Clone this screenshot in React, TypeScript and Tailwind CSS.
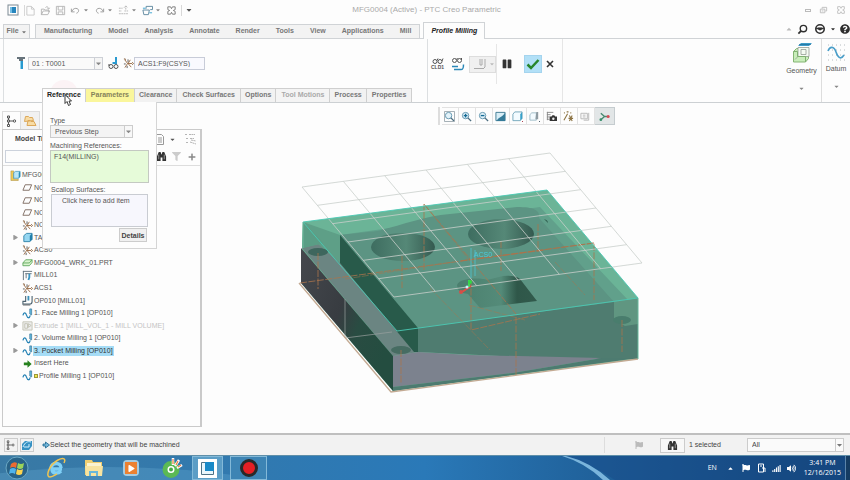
import { ReactNode } from 'react'
import clsx from 'clsx'
import { FaCaretDown, FaCaretUp, FaPause, FaPlay, FaQuestionCircle, FaFlag, FaFilter, FaPlus, FaVolumeUp, FaSignal } from 'react-icons/fa'

type IconProps = {
  className?: string
}

type TreeItem = {
  label: string
  icon: (props: IconProps) => ReactNode
  expandable?: boolean
  root?: boolean
  faded?: boolean
  selected?: boolean
  marker?: boolean
}

// Title bar icons
const AppIcon = ({ className }: IconProps) => (
  <svg className={className} viewBox="0 0 12 12" fill="none">
    <rect x="1" y="1" width="10" height="10" stroke="#7d8a93" />
    <rect x="3" y="3" width="6" height="6" fill="#2685bd" />
    <path d="M3 3h2v6H3z" fill="#73bde4" />
  </svg>
)

const NewIcon = ({ className }: IconProps) => (
  <svg className={className} viewBox="0 0 12 12" fill="none" stroke="#c8c8c8">
    <path d="M2 1.500h5l3 3v6.500H2zM7 1.500v3h3" />
  </svg>
)

const OpenIcon = ({ className }: IconProps) => (
  <svg className={className} viewBox="0 0 12 12" fill="none" stroke="#b2b2b2">
    <path d="M1.500 10.500v-6h3l1 1h4v2M1.500 10.500l2-4h7l-2 4zM6 3c1-2 3-1 3.500 1M8 3.500l1.500 1 1-1.500" />
  </svg>
)

const SaveIcon = ({ className }: IconProps) => (
  <svg className={className} viewBox="0 0 12 12" fill="none" stroke="#b5b5b5">
    <path d="M1.500 1.500h9v9h-9zM3.500 1.500v4h5v-4M3.500 10.500v-3h5v3" />
  </svg>
)

const UndoIcon = ({ className }: IconProps) => (
  <svg className={className} viewBox="0 0 12 12" fill="none" stroke="#999">
    <path d="M1.500 4v3.500H5M2 7c1-3 4-4 6-3s2 4-1 5" />
  </svg>
)

const RegenIcon = ({ className }: IconProps) => (
  <svg className={className} viewBox="0 0 12 12" fill="none" stroke="#b5b5b5">
    <path d="M1 3.500h4M1 6.500h3M1 9.500h10M7 6.500h4M8.500 5V1M6.500 3l2-2 2 2" strokeDasharray="2 .6" />
  </svg>
)

const WindowsIcon = ({ className }: IconProps) => (
  <svg className={className} viewBox="0 0 12 12" fill="none">
    <path d="M4.500 4V1.500h7V5H9M1 5.500h7l-1 5H2z" stroke="#5d879e" />
    <path d="M1 3.500h3M8 8.500h3" stroke="#36a2d0" />
  </svg>
)

const CloseBoxIcon = ({ className }: IconProps) => (
  <svg className={className} viewBox="0 0 12 12" fill="none" stroke="currentColor">
    <path d="M2 2h3l1 2 1-2h3v3L8 6l2 1v3H7L6 8l-1 2H2V7l2-1-2-1z" />
  </svg>
)

const RestoreIcon = ({ className }: IconProps) => (
  <svg className={className} viewBox="0 0 10 10" fill="none" stroke="#bbb">
    <path d="M3.500 3V1.500h5v4H7M1.500 3.500h5v4h-5zM3 5.500h2" />
  </svg>
)

const SearchIcon = ({ className }: IconProps) => (
  <svg className={className} viewBox="0 0 12 12" fill="none" stroke="#2f2f2f" strokeWidth="1.500">
    <circle cx="7" cy="5" r="3.500" />
    <path d="M4.500 7.500 1.500 10.500" strokeWidth="2" />
  </svg>
)

const LearnIcon = ({ className }: IconProps) => (
  <svg className={className} viewBox="0 0 12 12" fill="none">
    <circle cx="6" cy="6" r="4.200" stroke="#2f2f2f" strokeWidth="1.600" />
    <path d="M1 5h10L6 7.500z" fill="#2f2f2f" />
    <path d="M3.500 4.500h5" stroke="#888" />
  </svg>
)

// Ribbon icons
const ToolIcon = ({ className }: IconProps) => (
  <svg className={className} viewBox="0 0 10 14">
    <path d="M1 1h8v2H7v2H3V3H1z" fill="#67737b" />
    <path d="M4 5h3v8H4z" fill="#2a9ad0" />
    <path d="M4 5h1v8H4z" fill="#8cd3ef" />
  </svg>
)

const GlassesToolIcon = ({ className }: IconProps) => (
  <svg className={className} viewBox="0 0 12 14" fill="none">
    <path d="M9 1v6H5.500" stroke="#2a9ad0" strokeWidth="2" />
    <g stroke="#555"><circle cx="4" cy="10.500" r="2" /><circle cx="9" cy="10.500" r="2" /><path d="M2 10V8" /></g>
  </svg>
)

const CsysIcon = ({ className }: IconProps) => (
  <svg className={className} viewBox="0 0 12 12" fill="none">
    <path d="M5 6h5M5 6 2 10.500M5 6 2 2M5.500 6 9 10M5.500 6 8 2" stroke="#9a6b45" />
    <path d="M5.500 1.500v3M1 6.500h2M4.500 8.500v2.500" stroke="#555" />
    <path d="M10 4.500 11.500 6 10 7.500M1 1h1.500v1.500" stroke="#8a6340" />
  </svg>
)

const CldIcon = ({ className }: IconProps) => (
  <svg className={className} viewBox="0 0 12 6" fill="none" stroke="#555">
    <circle cx="3" cy="3.500" r="2" /><circle cx="8" cy="3.500" r="2" /><path d="M5 2.500 6 .500M10 3l1-2.500" />
  </svg>
)

const PathIcon = ({ className }: IconProps) => (
  <svg className={className} viewBox="0 0 14 14" fill="none">
    <g stroke="#555"><circle cx="3.500" cy="3.500" r="2" /><circle cx="8.500" cy="3.500" r="2" /><path d="M5.500 2.500 6.500 1M10.500 3V1" /></g>
    <path d="M1 9.500h6M3 12.500h7c2 0 2.500-1 2.500-5" stroke="#2a88b8" strokeWidth="1.500" />
  </svg>
)

const GeometryIcon = ({ className }: IconProps) => (
  <svg className={className} viewBox="0 0 20 22" fill="none">
    <path d="M9 1h11l-3 3H6z" fill="#3c9bc9" />
    <path d="M7 2.500h12" stroke="#1f6c94" strokeWidth=".7" />
    <path d="M1.500 9.500l3-3h12v10l-3 3.500h-12z" fill="#c8edba" stroke="#85b574" />
    <path d="M6 5.500h11v9H6zM6 14.500l-3 3M9 7.500h5v5H9z" fill="#f4fbf2" stroke="#959d94" strokeWidth=".8" />
    <path d="M1.500 9.500h4v5h8V20" stroke="#7fb070" />
  </svg>
)

const DatumIcon = ({ className }: IconProps) => (
  <svg className={className} viewBox="0 0 20 20" fill="none">
    {[2, 7, 12, 17].map((y) => <path key={y} d={`M2 ${y}h17`} stroke="#b6bcc0" strokeDasharray="1 3" />)}
    <path d="M2 8c2-5 6-5 8 1s5 8 8 3" stroke="#4a9ec9" strokeWidth="1.600" />
  </svg>
)

// Graphics toolbar icons
const Magnifier = ({ className, children }: IconProps & { children?: ReactNode }) => (
  <svg className={className} viewBox="0 0 12 12" fill="none">
    <circle cx="5" cy="5" r="3.500" fill="#e3f3fa" stroke="#5d93ad" />
    <path d="M7.500 7.500 11 11" stroke="#4d6e80" strokeWidth="1.500" />
    {children}
  </svg>
)

const ZoomFitIcon = ({ className }: IconProps) => (
  <Magnifier className={className}><path d="M.5.500h11v11H.500z" stroke="#9aa6ad" /></Magnifier>
)

const ZoomInIcon = ({ className }: IconProps) => (
  <Magnifier className={className}><path d="M3 5h4M5 3v4" stroke="#146a95" strokeWidth="1.500" /></Magnifier>
)

const ZoomOutIcon = ({ className }: IconProps) => (
  <Magnifier className={className}><path d="M3 5h4" stroke="#146a95" strokeWidth="1.500" /></Magnifier>
)

const RepaintIcon = ({ className }: IconProps) => (
  <svg className={className} viewBox="0 0 12 12">
    <path d="M1 1.500h10v9H1z" fill="#d8eef7" stroke="#3d7892" />
    <path d="M11 2v9H2c1-4 6-4 9-9z" fill="#357b99" />
  </svg>
)

const BoxIcon = ({ className }: IconProps) => (
  <svg className={className} viewBox="0 0 12 12">
    <path d="M1 3.500 3 1h8v7l-2 2.500H1z" fill="#f3fbff" stroke="#72a5ba" />
    <path d="M9 3.500 11 1v7l-2 2.500z" fill="#38a1c9" />
    <path d="M11 11h1v1h-1z" fill="#a34" />
  </svg>
)

const SavedViewIcon = ({ className }: IconProps) => (
  <svg className={className} viewBox="0 0 12 12">
    <path d="M1 4l2-2h5v8H1z" fill="#f3fbff" stroke="#9cbac6" />
    <path d="M8 1h2v8H7z" fill="#8e9ba2" />
    <path d="M11 11h1v1h-1z" fill="#456" />
  </svg>
)

const CameraIcon = ({ className }: IconProps) => (
  <svg className={className} viewBox="0 0 12 12" fill="none">
    <path d="M1 1.500h7M1 4h4M1 6.500h3M1 9h3M1.500 1v9" stroke="#888" />
    <path d="M4 6h2l1-1.500h2L10 6h2v5H4z" fill="#333" />
    <circle cx="8" cy="8.500" r="1.300" fill="#eee" />
  </svg>
)

const DatumDisplayIcon = ({ className }: IconProps) => (
  <svg className={className} viewBox="0 0 12 12" fill="none">
    <path d="M1 2h1M4 1h2M8 2h1M5 3 1 10M6 8h5M7 5l3 6M10 5l-3 6" stroke="#8d7443" strokeWidth="1.200" />
  </svg>
)

const AnnotationIcon = ({ className }: IconProps) => (
  <svg className={className} viewBox="0 0 12 12" fill="none" stroke="#b5b5b5">
    <path d="M1 2.500h7v6H1zM3 4.500h3M3 6.500h3M9.500 2v8H4" />
  </svg>
)

const SpinIcon = ({ className }: IconProps) => (
  <svg className={className} viewBox="0 0 12 12" fill="none">
    <path d="M2 2.500 6 6 2 9.500M6 6h4" stroke="#478a70" strokeWidth="1.500" />
    <circle cx="10" cy="6" r="1.700" fill="#d64c55" />
    <circle cx="2" cy="9.500" r="1.500" fill="#38906c" />
  </svg>
)

// Model tree icons
const StructureIcon = ({ className }: IconProps) => (
  <svg className={className} viewBox="0 0 12 12" fill="none" stroke="#555">
    <path d="M1.500 1h2v2h-2zM1.500 5h2v2h-2zM1.500 9.500h2v2h-2zM2.500 3v2M2.500 7v2.500M4 6h3" />
    <circle cx="8.500" cy="6" r="1.200" />
  </svg>
)

const FoldersIcon = ({ className }: IconProps) => (
  <svg className={className} viewBox="0 0 14 12" fill="#f8dca4" stroke="#dca85a">
    <path d="M1.500 6.500l1-5h3l1 1h3l1 3zM4 10.500l1-5h2l1 1h3l2 4z" />
  </svg>
)

const AssemblyIcon = ({ className }: IconProps) => (
  <svg className={className} viewBox="0 0 12 12">
    <path d="M1 1h3v9h5v1.500H1z" fill="#f0ca55" stroke="#ad9144" strokeWidth=".6" />
    <path d="M4 3l2-1.500h5V7L9.500 9H4z" fill="#b8e6f8" stroke="#3d91b5" strokeWidth=".8" />
    <path d="M9.500 3 11 1.500V7L9.500 9z" fill="#298bb7" />
  </svg>
)

const PlaneIcon = ({ className }: IconProps) => (
  <svg className={className} viewBox="0 0 12 12" fill="none" stroke="#7d695f">
    <path d="M3.500 3h7l-2.500 6H1z" />
  </svg>
)

const PartIcon = ({ className }: IconProps) => (
  <svg className={className} viewBox="0 0 12 12">
    <path d="M2 4l3-2.500h6V8L8.500 10.500H2z" fill="#95d6f1" stroke="#2f82a8" />
    <path d="M8.500 4 11 1.500V8l-2.500 2.500z" fill="#217fab" />
  </svg>
)

const WorkpieceIcon = ({ className }: IconProps) => (
  <svg className={className} viewBox="0 0 12 12">
    <path d="M1 6.500l3-3.500h7v3L8 9.500H1z" fill="#d9f4ce" stroke="#62a960" />
    <path d="M1 6.500h7l3-3.500" fill="none" stroke="#62a960" />
  </svg>
)

const MillIcon = ({ className }: IconProps) => (
  <svg className={className} viewBox="0 0 12 12" fill="none">
    <path d="M1 1.500h10M1.500 1v10M3.500 4h7M4.500 4v5" stroke="#60717b" />
    <path d="M8 4v4l-1 3" stroke="#3a95c3" strokeWidth="2" />
  </svg>
)

const OperationIcon = ({ className }: IconProps) => (
  <svg className={className} viewBox="0 0 12 12" fill="none">
    <path d="M4 1v6H1v3h7c2 0 3-1 3-3V1" stroke="#4b6270" strokeWidth="1.200" />
    <path d="M7 1v5" stroke="#3b91bb" strokeWidth="2" />
    <path d="M1 11h8" stroke="#777" />
  </svg>
)

const StepIcon = ({ className }: IconProps) => (
  <svg className={className} viewBox="0 0 12 12" fill="none">
    <path d="M1 8c1-4 3-3 4 0s3 4 4 0" stroke="#2783b5" strokeWidth="1.400" />
    <path d="M8.500 1v5.500l2 1V1z" fill="#66bfe5" stroke="#3a779a" strokeWidth=".8" />
  </svg>
)

const ExtrudeIcon = ({ className }: IconProps) => (
  <svg className={className} viewBox="0 0 12 12" fill="#eee" stroke="#c3c3b5">
    <path d="M1 2h10v9H1zM3 4h3v5H3zM7 4l3 2-3 2z" />
  </svg>
)

const InsertIcon = ({ className }: IconProps) => (
  <svg className={className} viewBox="0 0 12 12">
    <path d="M2 5h4V2.500L10.500 6.500 6 10.500V8H2z" fill="#26811e" />
  </svg>
)

const BinocularsIcon = ({ className }: IconProps) => (
  <svg className={className} viewBox="0 0 12 12" fill="#333">
    <path d="M3 1h2l1 3 1-3h2l2 5v5H7V7H5v4H1V6z" />
    <path d="M3 4v5M9 4v5" stroke="#999" />
  </svg>
)

const SettingsListIcon = ({ className }: IconProps) => (
  <svg className={className} viewBox="0 0 12 12" fill="none" stroke="#999">
    <path d="M1.500 1h7l2 2v8h-9zM3 4.500h1M5 4.500h4M3 6.500h1M5 6.500h4M3 8.500h1M5 8.500h4" />
  </svg>
)

const TreeFilterIcon = ({ className }: IconProps) => (
  <svg className={className} viewBox="0 0 14 12" fill="none" stroke="#b5b5b5">
    <path d="M1 1.500h2M5 1.500h6M2 5.500h2M6 5.500h4M2 9.500h2M6 9l6 2M7 7l5 1" strokeDasharray="2 .5" />
  </svg>
)

const ArrowIcon = ({ className }: IconProps) => (
  <svg className={className} viewBox="0 0 8 8">
    <path d="M1 3h2.500V1L7.500 4 3.500 7V5H1z" fill="#74b6d8" stroke="#1a6591" strokeWidth=".8" />
  </svg>
)

const quickAccess = [
  { label: 'New', icon: NewIcon, menu: false },
  { label: 'Open', icon: OpenIcon, menu: false },
  { label: 'Save', icon: SaveIcon, menu: false },
  { label: 'Undo', icon: UndoIcon, menu: true },
  { label: 'Redo', icon: UndoIcon, menu: true },
  { label: 'Regenerate', icon: RegenIcon, menu: true },
  { label: 'Windows', icon: WindowsIcon, menu: true },
  { label: 'Close', icon: CloseBoxIcon, menu: false },
]

const ribbonTabs = ['Manufacturing', 'Model', 'Analysis', 'Annotate', 'Render', 'Tools', 'View', 'Applications', 'Mill']

const dashTabs = [
  { label: 'Reference', style: 'bg-[#fdfdfd] px-1 text-[#222]' },
  { label: 'Parameters', style: 'bg-[#faf69c] px-[5px] text-[#85825a]' },
  { label: 'Clearance', style: 'bg-[#f2f2f2] px-1 text-[#777]' },
  { label: 'Check Surfaces', style: 'bg-[#f2f2f2] px-[5px] text-[#777]' },
  { label: 'Options', style: 'bg-[#f2f2f2] px-1 text-[#777]' },
  { label: 'Tool Motions', style: 'bg-[#f4f4f4] px-[5px] text-[#aaa]' },
  { label: 'Process', style: 'bg-[#f2f2f2] px-1 text-[#777]' },
  { label: 'Properties', style: 'bg-[#f2f2f2] px-[5px] text-[#777]' },
]

const viewTools = [
  { label: 'Refit', icon: ZoomFitIcon },
  { label: 'Zoom In', icon: ZoomInIcon },
  { label: 'Zoom Out', icon: ZoomOutIcon },
  { label: 'Repaint', icon: RepaintIcon },
  { label: 'Display Style', icon: BoxIcon },
  { label: 'Saved Orientations', icon: SavedViewIcon },
  { label: 'View Manager', icon: CameraIcon },
  { label: 'Datum Display', icon: DatumDisplayIcon },
  { label: 'Annotation Display', icon: AnnotationIcon },
  { label: 'Spin Center', icon: SpinIcon },
]

const treeItems: TreeItem[] = [
  { label: 'MFG00', icon: AssemblyIcon, root: true },
  { label: 'NC', icon: PlaneIcon },
  { label: 'NC', icon: PlaneIcon },
  { label: 'NC', icon: PlaneIcon },
  { label: 'NC', icon: CsysIcon },
  { label: 'TA', icon: PartIcon, expandable: true },
  { label: 'ACS0', icon: CsysIcon },
  { label: 'MFG0004_WRK_01.PRT', icon: WorkpieceIcon, expandable: true },
  { label: 'MILL01', icon: MillIcon },
  { label: 'ACS1', icon: CsysIcon },
  { label: 'OP010 [MILL01]', icon: OperationIcon },
  { label: '1. Face Milling 1 [OP010]', icon: StepIcon },
  { label: 'Extrude 1 [MILL_VOL_1 - MILL VOLUME]', icon: ExtrudeIcon, expandable: true, faded: true },
  { label: '2. Volume Milling 1 [OP010]', icon: StepIcon },
  { label: '3. Pocket Milling [OP010]', icon: StepIcon, expandable: true, selected: true },
  { label: 'Insert Here', icon: InsertIcon },
  { label: 'Profile Milling 1 [OP010]', icon: StepIcon, marker: true },
]

const TitleBar = () => (
  <header className="flex h-5 items-center pl-[7px] pr-1">
    <div className="flex flex-1 items-center">
      <AppIcon className="size-3" />
      <div className="ml-[5px] flex items-center border-x border-[#d8d8d8]">
        {quickAccess.map(({ label, icon: Icon, menu }) => (
          <button key={label} aria-label={label} className={clsx('flex items-center text-[#777]', menu ? 'w-6 gap-0.5' : 'w-[15px]')}>
            <Icon className={clsx('size-[11px]', label === 'Redo' && '-scale-x-100')} />
            {menu && <FaCaretDown className="size-[6px] text-[#888]" />}
          </button>
        ))}
      </div>
      <button aria-label="Customize" className="ml-[3px]"><FaCaretDown className="size-2 text-[#555]" /></button>
    </div>
    <h1 className="text-[8px] text-[#aaa]">MFG0004 (Active) - PTC Creo Parametric</h1>
    <div className="flex flex-1 items-center justify-end gap-2">
      <button aria-label="Minimize" className="h-[3px] w-[6px] border border-[#bbb]"></button>
      <button aria-label="Restore"><RestoreIcon className="size-[9px]" /></button>
      <button aria-label="Close window" className="text-[#bbb]"><CloseBoxIcon className="size-[10px]" /></button>
    </div>
  </header>
)

const RibbonTabs = () => (
  <nav className="flex h-[19px] items-end border-b border-[#d0d3d6] text-[7px] font-bold text-[#777]">
    <button className="ml-[3px] flex h-[14px] w-[27px] items-center justify-center gap-0.5 border border-b-0 border-[#d0d3d6] bg-[#f3f3f3]">
      File <FaCaretDown className="size-[6px]" />
    </button>
    <div className="ml-[5px] flex h-[14px] border border-b-0 border-[#d0d3d6] bg-[#f3f3f3]">
      {ribbonTabs.map((tab) => (
        <button key={tab} className="px-2">{tab}</button>
      ))}
    </div>
    <button className="-mb-px ml-[3px] h-[17px] border border-b-0 border-[#d0d3d6] bg-[#fdfdfd] px-[7px] italic text-[#222]">Profile Milling</button>
    <div className="ml-auto flex h-full items-center gap-1 text-[#2f2f2f]">
      <button aria-label="Minimize ribbon"><FaCaretUp className="size-2 text-[#bbb]" /></button>
      <button aria-label="Search"><SearchIcon className="size-[11px]" /></button>
      <button aria-label="Learning" className="ml-0.5"><LearnIcon className="size-3" /></button>
      <button aria-label="More"><FaCaretDown className="size-[6px]" /></button>
      <button aria-label="Help"><FaQuestionCircle className="size-[10px]" /></button>
    </div>
  </nav>
)

const Cursor = () => (
  <svg className="pointer-events-none absolute left-[22px] top-[6px] z-20 h-3 w-2" viewBox="0 0 8 12">
    <path d="M1 .500V9.500l2-2 1.500 4 2-1L5 7h2.500z" fill="#fff" stroke="#222" strokeWidth=".9" />
  </svg>
)

// Slide-down panel of the Reference tab
const ReferencePanel = () => (
  <div className="absolute left-0 top-full z-10 flex h-[147px] w-[115px] flex-col border border-t-0 border-[#d5d5d5] bg-[#fdfdfd] pl-[7px] pr-[6px] pt-[14px] text-[7px] leading-[9px] text-[#555]">
    <label htmlFor="ref-type">Type</label>
    <div className="relative w-[83px]">
      <select id="ref-type" className="block h-[13px] w-full appearance-none border border-[#ccc] bg-[#f4f4f4] pl-1 text-[7px] leading-[11px]">
        <option>Previous Step</option>
      </select>
      <FaCaretDown className="pointer-events-none absolute right-0 top-0 h-[13px] w-[9px] border border-[#ccc] bg-[#f8f8f8] p-px text-[#888]" />
    </div>
    <label htmlFor="machining-refs" className="mt-[3px]">Machining References:</label>
    <textarea id="machining-refs" defaultValue="F14(MILLING)" className="h-[33px] w-[99px] resize-none border border-[#c4c9c2] bg-[#e6fbd9] px-[3px] py-px" />
    <label htmlFor="scallop" className="mt-[2px] pl-px">Scallop Surfaces:</label>
    <textarea id="scallop" defaultValue="Click here to add item" className="ml-px h-[33px] w-[97px] resize-none border border-[#c9ccd2] bg-[#f7f7fd] py-px pl-[10px]" />
    <button className="mr-[3px] mt-px h-[14px] w-7 self-end border border-[#ccc] bg-[#f0f0f0] font-bold text-[#444]">Details</button>
  </div>
)

const Ribbon = () => (
  <section className="flex h-16 border-b border-[#ccd0d3] text-[7px] text-[#555]">
    <div className="ml-[3px] flex w-[425px] flex-col justify-between border-l border-r border-[#dcdfe1]">
      <div className="mt-[17px] flex items-center pl-3">
        <ToolIcon className="h-[14px] w-[10px]" />
        <div className="relative ml-[2px] w-[75px]">
          <select aria-label="Cutting tool" className="block h-[13px] w-full appearance-none border border-[#cdd0d6] bg-[#fafafa] pl-[3px] text-[7px] leading-[11px]">
            <option>01 : T0001</option>
          </select>
          <FaCaretDown className="pointer-events-none absolute right-0 top-0 h-[13px] w-[9px] border border-[#cdd0d6] bg-[#f5f5f5] p-px text-[#888]" />
        </div>
        <button aria-label="Tool preview" className="ml-1"><GlassesToolIcon className="h-[14px] w-3" /></button>
        <CsysIcon className="ml-1 size-[11px]" />
        <input aria-label="Coordinate system" defaultValue="ACS1:F9(CSYS)" className="h-[13px] w-[71px] border border-[#c8ccd8] bg-[#f9f9fe] pl-[3px]" />
      </div>
      <div className="relative ml-[38px] w-max">
        <div className="absolute -top-2 left-2 size-7 rounded-full bg-[#fcf3f5]"></div>
        <div className="relative flex h-[14px] border-l border-t border-[#cfcfcf] font-bold">
          {dashTabs.map(({ label, style }) => (
            <button key={label} className={clsx('border-r border-[#cfcfcf]', style)}>{label}</button>
          ))}
        </div>
        <Cursor />
        <ReferencePanel />
      </div>
    </div>

    <div className="flex h-[50px] w-[134px] items-center">
      <button aria-label="CL data" className="ml-[2px] flex w-[15px] flex-col items-center text-[5px] font-bold leading-[6px]">
        <CldIcon className="h-[6px] w-3" />
        CLD1
      </button>
      <button aria-label="Play path" className="ml-[6px]"><PathIcon className="size-[14px]" /></button>
      <button aria-label="Simulate" className="ml-1 flex h-[17px] w-[27px] items-center justify-end gap-0.5 border border-[#ddd] bg-[#f0f0f0]">
        <svg className="h-3 w-[14px]" viewBox="0 0 14 12" fill="none" stroke="#aaa"><path d="M1 10.500h9M9 1v6H7V1M12 1v8l-2 2" /></svg>
        <FaCaretDown className="size-[6px] text-[#bbb]" />
      </button>
      <div className="h-10 w-px bg-[#e6e6e6]"></div>
      <button aria-label="Pause" className="ml-[5px]"><FaPause className="size-[10px] text-[#333]" /></button>
      <button aria-label="Accept" className="ml-3 flex size-[18px] items-center justify-center border border-[#a5d4ee] bg-[#b2e0f7]">
        <svg className="size-[14px]" viewBox="0 0 14 14" fill="none" stroke="#28862b" strokeWidth="2.500"><path d="M1.500 7.500 5 11l7.500-8" /></svg>
      </button>
      <button aria-label="Cancel" className="ml-1">
        <svg className="size-2" viewBox="0 0 8 8" stroke="#333" strokeWidth="1.600"><path d="m1 1 6 6M7 1 1 7" /></svg>
      </button>
    </div>

    <div className="flex flex-1 justify-end border-l border-[#e6e6e6]">
      <button className="flex w-10 flex-col items-center border-r border-[#ddd] pt-[3px]">
        <GeometryIcon className="h-[22px] w-5" />
        <span className="mt-[2px] text-[7px] leading-[10px]">Geometry</span>
        <FaCaretDown className="mt-[9px] size-[7px] text-[#888]" />
      </button>
      <button className="flex w-7 flex-col items-center pt-1">
        <DatumIcon className="size-5" />
        <span className="mt-px text-[7px] leading-[10px]">Datum</span>
        <FaCaretDown className="mt-[9px] size-[7px] text-[#888]" />
      </button>
    </div>
  </section>
)

const ModelTree = () => (
  <aside className="ml-[2px] flex w-[200px] flex-col pb-[6px] pt-2 text-[7px] text-[#555]">
    <div className="flex h-[18px]">
      <button aria-label="Model tree" className="flex w-[18px] items-center justify-center border-l border-t border-[#ddd]"><StructureIcon className="size-3" /></button>
      <button aria-label="Folders" className="flex w-5 items-center justify-center border border-b-0 border-[#ddd] bg-[#f1f1f1]"><FoldersIcon className="h-3 w-[14px]" /></button>
    </div>
    <div className="flex flex-1 flex-col border border-r-2 border-[#cacaca]">
      <div className="flex h-[18px] items-center justify-between pl-3 pr-[2px]">
        <h2 className="font-bold text-[#444]">Model Tree</h2>
        <div className="flex items-center">
          <button aria-label="Settings" className="flex items-center gap-1">
            <SettingsListIcon className="h-[13px] w-3" />
            <FaCaretDown className="size-[7px]" />
          </button>
          <button aria-label="Show" className="ml-2"><TreeFilterIcon className="h-3 w-[14px]" /></button>
        </div>
      </div>
      <div className="flex h-[18px] items-center border-b border-[#ddd] pl-[2px] pr-1">
        <input aria-label="Find in tree" className="h-[13px] w-[149px] border border-[#ccd2dc]" />
        <button aria-label="Find" className="ml-0.5"><BinocularsIcon className="size-[11px]" /></button>
        <button aria-label="Filter" className="ml-[5px]"><FaFilter className="size-[9px] text-[#ccc]" /></button>
        <button aria-label="Add" className="ml-auto"><FaPlus className="size-2 text-[#888]" /></button>
      </div>
      <ul className="mt-[3px] grid h-[213px] auto-rows-fr">
        {treeItems.map(({ label, icon: Icon, expandable, root, faded, selected, marker }, index) => (
          <li key={index} className={clsx('flex items-center whitespace-nowrap', root ? 'pl-[7px]' : 'pl-[10px]')}>
            {!root && (
              <span className="flex w-[9px]">
                {expandable && <FaPlay className="size-[5px] text-[#999]" />}
              </span>
            )}
            <Icon className="size-[11px] shrink-0" />
            {marker && <i className="ml-px size-1 border border-[#9b963b] bg-[#f1ea4a]"></i>}
            <span className={clsx('px-px leading-[10px]', faded && 'text-[#c4c4c4]', selected && 'bg-[#a5dcf6] text-[#333]')}>{label}</span>
          </li>
        ))}
      </ul>
    </div>
  </aside>
)

// Corner points of the retract plane grid
const grid = { x: 302, y: 187, acrossX: 248, acrossY: -34, downX: 92, downY: 110 }

const GridLines = () => (
  <g stroke="#c9cfcc" strokeWidth=".8">
    {Array.from({ length: 7 }, (_, index) => {
      const t = index / 6
      const rowX = grid.x + grid.downX * t
      const rowY = grid.y + grid.downY * t
      const colX = grid.x + grid.acrossX * t
      const colY = grid.y + grid.acrossY * t
      return (
        <g key={index}>
          <line x1={rowX} y1={rowY} x2={rowX + grid.acrossX} y2={rowY + grid.acrossY} />
          <line x1={colX} y1={colY} x2={colX + grid.downX} y2={colY + grid.downY} />
        </g>
      )
    })}
  </g>
)

const Workpiece = () => (
  <svg className="min-h-0 w-full flex-1" viewBox="202 130 648 303" role="img" aria-label="Workpiece model">
    <defs>
      <linearGradient id="hole" x1="0" x2="1">
        <stop offset="0" stopColor="#3e6d60" />
        <stop offset=".55" stopColor="#558877" />
        <stop offset="1" stopColor="#34594f" />
      </linearGradient>
      <linearGradient id="pocket" x1="0" x2="1">
        <stop offset="0" stopColor="#4b7f6e" />
        <stop offset=".55" stopColor="#548b79" />
        <stop offset=".75" stopColor="#2f5749" />
        <stop offset="1" stopColor="#315a4c" />
      </linearGradient>
      <linearGradient id="side" x1="0" x2="1" y1="0" y2=".6">
        <stop offset="0" stopColor="#45484d" />
        <stop offset=".5" stopColor="#383c41" />
        <stop offset=".7" stopColor="#294c42" />
        <stop offset="1" stopColor="#244d40" />
      </linearGradient>
    </defs>

    {/* Stock envelope */}
    <path d="M303 222 547 190 638 298 638 359 393 391 301 283z" fill="#6bb497" />
    <path d="M303 235 340 235 540 207 628 300 638 359 397 335 303 248z" fill="#61a08b" />

    {/* Lower ledge and side wall */}
    <path d="M302 248 338 240 418 352 393 356z" fill="#6b8582" />
    <path d="M301 248 393 356V391L301 283z" fill="url(#side)" />
    <path d="M303 222 340 235V263L318 244 302 248z" fill="#5e9f87" />
    <path d="M303 222V248L323 243z" fill="#5a9d85" />

    {/* Raised block */}
    <path d="M340 235 378 231C405 224 425 216 450 214L517 207C536 207 540 211 539 218L614 302 418 328z" fill="#5c9483" />
    <path d="M340 235 418 328V352H414L340 263z" fill="#285a4a" />
    <path d="M418 328 614 302 638 324V359L560 359 418 352z" fill="#4f7c70" />
    <path d="M614 302 638 298V324L625 326 614 320z" fill="#609681" />

    {/* Front foot */}
    <path d="M393 356 418 352 470 355 602 358 513 373 393 387z" fill="#7c828e" />
    <path d="M393 387 513 373 602 358 638 358 393 391z" fill="#4d7b70" />

    {/* Holes */}
    <ellipse cx="403" cy="247" rx="32" ry="14" fill="url(#hole)" />
    <ellipse cx="501" cy="234" rx="33" ry="15" fill="url(#hole)" />
    <ellipse cx="318" cy="252" rx="10" ry="4" fill="#3e665d" />
    <ellipse cx="401" cy="350" rx="10" ry="4" fill="#466c62" />
    <ellipse cx="622" cy="320" rx="9" ry="4" fill="#497d6d" />
    <path d="M544 219q4 1 4 4z" fill="#2e5d4d" />
    <path d="M457 285C460 277 483 278 487 280L503 276Q515 275 520 279L537 301 480 308 468 294Q457 293 457 285z" fill="url(#pocket)" />

    {/* Datum planes and axes */}
    <g stroke="#a9744c" strokeWidth=".8" strokeDasharray="7 1.500" fill="none">
      <path d="M300 283 454 262 594 243V300M424 270V204L516 314V376M318 253V289M402 256V288M594 243 460 261 545 250M471 280V330L540 314M538 224V252M501 241V271M622 320V352M401 350V383" />
      <path d="M345 279 454 262M424 204 469 260M469 305 525 320M430 288 490 350M555 262 585 295" strokeWidth=".5" />
    </g>
    <path d="M345 299V338L392 332" stroke="#9aa19f" strokeWidth=".7" fill="none" />
    <path d="M299 283 391 392 638 359" stroke="#c3aa93" strokeWidth="1.300" fill="none" />

    <GridLines />

    <path d="M303 222 547 190 638 298 397 331z" fill="none" stroke="#4bcab4" strokeWidth=".9" />
    <path d="M638 298V359M303 222V248" stroke="#69b89b" fill="none" />

    {/* Coordinate system */}
    <path d="M471 248V278M475 250V276" stroke="#4bcada" strokeWidth=".7" />
    <text x="474" y="257" className="fill-[#4bcada] text-[7px]">ACS0</text>
    <path d="M471 286 462 292" stroke="#df4f45" strokeWidth="2" />
    <path d="M469 287V280" stroke="#42d75a" strokeWidth="2" />
    <circle cx="470" cy="282" r="2" fill="#33d944" />
    <circle cx="467" cy="287" r="1.500" fill="#c5f2ff" />
    <circle cx="461" cy="292" r="2" fill="#d54f48" />
  </svg>
)

const GraphicsArea = () => (
  <section className="flex min-w-0 flex-1 flex-col items-center">
    <div className="mt-1 flex h-[18px] border-l-2 border-[#ddd] pl-0.5">
      {viewTools.map(({ label, icon: Icon }) => (
        <button
          key={label}
          aria-label={label}
          className={clsx('flex items-center justify-center border border-l-0', label === 'Spin Center' ? 'w-5 border-[#c5cccf] bg-[#e2e6e7]' : 'w-[17px] border-[#e2e2e2]')}
        >
          <Icon className="size-[11px]" />
        </button>
      ))}
    </div>
    <div className="flex min-h-0 w-full flex-1 pt-[5px]">
      <Workpiece />
    </div>
  </section>
)

const StatusBar = () => (
  <footer className="flex h-[22px] items-center border-t-2 border-[#bfbfbf] bg-[#f2f2f2] text-[7px] text-[#444]">
    <button aria-label="Toggle tree" className="ml-1 flex size-[14px] items-center justify-center border border-[#ccc]"><StructureIcon className="size-[10px]" /></button>
    <button aria-label="Toggle browser" className="ml-[2px] flex size-[14px] items-center justify-center border border-[#ccc]">
      <svg className="size-3" viewBox="0 0 12 12"><path d="M1 5 4 2h7v5l-3 4H1z" fill="#3691c3" /><path d="M2 8c2-5 5-6 8-5M3 8h5V5" fill="none" stroke="#d4f1ff" /></svg>
    </button>
    <ArrowIcon className="ml-2 size-2" />
    <p>Select the geometry that will be machined</p>
    <div className="ml-auto h-4 w-px bg-[#ddd]"></div>
    <FaFlag className="ml-[30px] size-2 text-[#bbb]" />
    <button aria-label="Find" className="ml-[17px] flex h-[15px] w-[25px] items-center justify-center border border-[#ccc] bg-[#f8f8f8]"><BinocularsIcon className="size-[11px]" /></button>
    <span className="ml-1 w-[58px]">1 selected</span>
    <div className="relative mr-[6px] w-[97px]">
      <select aria-label="Selection filter" className="block h-[14px] w-full appearance-none border border-[#ccc] bg-[#fafafa] pl-1 text-[7px] leading-3">
        <option>All</option>
      </select>
      <FaCaretDown className="pointer-events-none absolute right-0 top-0 h-[14px] w-[9px] border border-[#ccc] p-px text-[#777]" />
    </div>
  </footer>
)

const Taskbar = () => (
  <nav className="relative flex h-[25px] items-center overflow-hidden border-t border-[#5f8fa9] bg-linear-to-r from-[#3979a4] via-[#2a79b8] to-[#123f70] text-white">
    <svg className="absolute inset-0 h-full w-full" viewBox="0 0 850 25" preserveAspectRatio="none">
      <path d="M560 0h290v25H615Q592 8 560 0z" fill="#174c8b" opacity=".55" />
      <path d="M566 0Q590 6 610 25H603Q585 7 562 0z" fill="#91caec" opacity=".8" />
      <path d="M0 18Q130 2 270 25H0z" fill="#6ab1d6" opacity=".3" />
    </svg>
    <button aria-label="Start" className="relative ml-[5px]">
      <svg className="size-6" viewBox="0 0 24 24">
        <circle cx="12" cy="12" r="11" fill="#286287" stroke="#6aa8c4" />
        <path d="M6 8q3-3 6-1l-1 5q-3-2-6 0z" fill="#ec6b31" />
        <path d="M13 7q3 2 6 0l-1 5q-3 2-6 0z" fill="#9bd45a" />
        <path d="M5 13q3-2 6 0l-1 5q-3-2-6 0z" fill="#50b4eb" />
        <path d="M12 13q3 2 6 0l-1 5q-3 2-6 0z" fill="#fbd34f" />
      </svg>
    </button>
    <button aria-label="Internet Explorer" className="relative ml-4">
      <svg className="size-[22px]" viewBox="0 0 22 22" fill="none">
        <path d="M17 12H7c0 5 6 5 9 2M6 11c1-6 10-6 10 0" stroke="#7fd0f7" strokeWidth="3.500" />
        <path d="M5 20C0 20 4 8 13 3c6-3 8-1 6 3M5 20c3 0 5-2 7-3" stroke="#efc453" strokeWidth="1.500" />
      </svg>
    </button>
    <button aria-label="File Explorer" className="relative ml-[17px]">
      <svg className="size-5" viewBox="0 0 20 20">
        <path d="M1 2h7l1 2h9v13H1z" fill="#f0cf72" /><path d="M3 5h14v4H3z" fill="#faf3d1" />
        <path d="M1 8h18l-1 10H2z" fill="#f7e3a0" /><path d="M5 18v-5h9v5h-2v-3H7v3z" fill="#67b7da" />
      </svg>
    </button>
    <button aria-label="Media Player" className="relative ml-[19px] flex size-4 items-center justify-center rounded-sm bg-[#a6cce1]">
      <span className="flex size-3 items-center justify-center bg-[#ec8131]"><FaPlay className="size-[7px]" /></span>
    </button>
    <button aria-label="Browser" className="relative ml-[22px]">
      <svg className="size-[22px]" viewBox="0 0 22 22" fill="none">
        <circle cx="10" cy="12.500" r="6" fill="#fff" stroke="#5bb954" strokeWidth="5" />
        <circle cx="10" cy="12.500" r="2" fill="#48a947" />
        <path d="M12 8V1M14 9l4-6M16 11l5-3" stroke="#fff" strokeWidth="2.500" />
        <path d="M12 7V2M15 8l2-4M17 10l3-2" stroke="#f07d42" strokeWidth="1.200" />
      </svg>
    </button>
    <button aria-label="Creo Parametric" className="relative ml-[9px] flex h-full w-[31px] items-center justify-center border border-[#83b9d8] bg-[#5b9dc6]">
      <svg className="size-[19px]" viewBox="0 0 19 19"><path d="M0 0h19v19H0z" fill="#fff" /><path d="M3.500 3.500h12v12h-12z" fill="#e9f6fc" stroke="#507386" /><path d="M7 3h9v9H7z" fill="#1989c7" /></svg>
    </button>
    <button aria-label="Recorder" className="relative ml-[7px] flex h-full w-[37px] items-center justify-center border border-[#83b9d8] bg-[#3d84b4]">
      <span className="size-[18px] rounded-full border-[3px] border-[#292929] bg-[#e51f24]"></span>
    </button>

    {/* System tray */}
    <div className="relative ml-auto flex h-full items-center font-['Open_Sans',sans-serif] text-[7px]">
      <span>EN</span>
      <FaCaretUp className="ml-2.5 size-[7px]" />
      <FaFlag className="ml-2 size-2" />
      <svg className="ml-[7px] h-[10px] w-[9px]" viewBox="0 0 9 10" fill="none" stroke="#fff"><path d="M1.500 1h5v8h-5zM3 3h2M5 5h3v4" /></svg>
      <FaSignal className="ml-1.5 size-[9px]" />
      <FaVolumeUp className="ml-1.5 size-[9px]" />
      <time className="ml-2 text-center leading-[10px]">3:41 PM<br />12/16/2015</time>
      <button aria-label="Show desktop" className="ml-1 h-full w-[5px] border-l border-[#5b84aa] bg-[#153c62]"></button>
    </div>
  </nav>
)

export default function App() {
  return (
    <div className="flex min-h-screen flex-col bg-[#fdfdfd] font-['Liberation_Sans',Arial,sans-serif]">
      <TitleBar />
      <RibbonTabs />
      <Ribbon />
      <main className="flex flex-1">
        <ModelTree />
        <GraphicsArea />
      </main>
      <StatusBar />
      <Taskbar />
    </div>
  )
}
